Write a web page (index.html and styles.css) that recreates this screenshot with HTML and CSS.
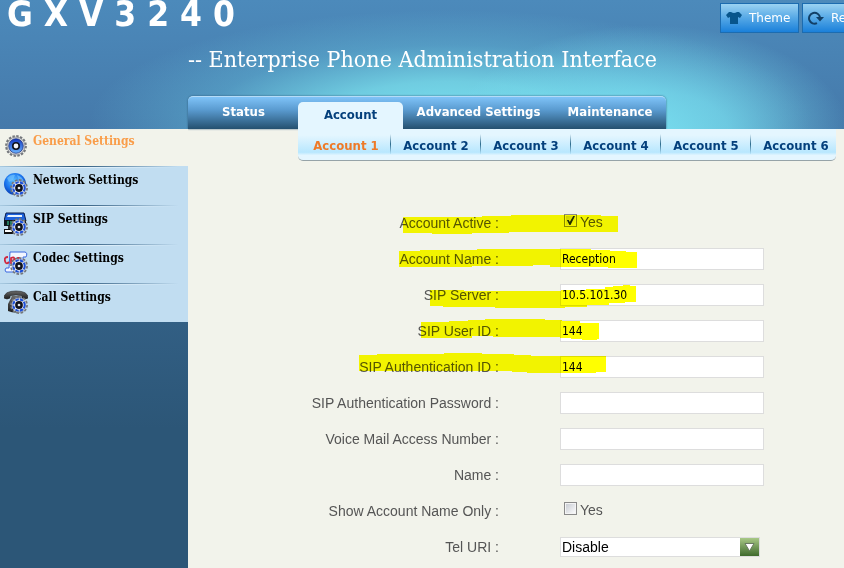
FILE: index.html
```html
<!DOCTYPE html>
<html lang="en">
<head>
<meta charset="UTF-8">
<meta name="viewport" content="width=device-width, initial-scale=1.0">
<title>GXV3240</title>
<link rel="stylesheet" href="styles.css">
</head>
<body>

<!-- shared icon parts -->
<svg class="defs" width="0" height="0" aria-hidden="true">
<defs>
<radialGradient id="blue" cx="45%" cy="35%" r="65%">
<stop offset="0" stop-color="#5cc0ff"/>
<stop offset="0.6" stop-color="#1a74ee"/>
<stop offset="1" stop-color="#0a3cb0"/>
</radialGradient>
<linearGradient id="ring" x1="0" y1="0" x2="0" y2="1">
<stop offset="0" stop-color="#1238c0"/>
<stop offset="1" stop-color="#6ab4ff"/>
</linearGradient>
<linearGradient id="dark" x1="0" y1="0" x2="0" y2="1">
<stop offset="0" stop-color="#6a6a6a"/>
<stop offset="1" stop-color="#1c1c1c"/>
</linearGradient>
<symbol id="gear" viewBox="0 0 24 24">
<circle cx="12" cy="12" r="10.6" fill="none" stroke="#74777c" stroke-width="2.6" stroke-dasharray="2.6 1.56"/>
<circle cx="12" cy="12" r="9.8" fill="#d4d6da" stroke="#85888d" stroke-width="0.8"/>
<circle cx="12" cy="12" r="7.9" fill="url(#ring)" stroke="#142a80" stroke-width="0.8"/>
<circle cx="12" cy="12" r="4.4" fill="#10131c"/>
<circle cx="12" cy="12" r="2.6" fill="#f4f6f8"/>
</symbol>
<symbol id="smallGear" viewBox="0 0 24 24">
<circle cx="12" cy="12" r="10.4" fill="none" stroke="#74777c" stroke-width="3" stroke-dasharray="3.4 2"/>
<circle cx="12" cy="12" r="9.8" fill="#c8cbd0"/>
<circle cx="12" cy="12" r="7.6" fill="#fff" stroke="#1c50d8" stroke-width="2.8" stroke-dasharray="4.6 1.4"/>
<circle cx="12" cy="12" r="5.2" fill="#10131c"/>
<circle cx="12" cy="12" r="1.8" fill="#e4e8ee"/>
</symbol>
</defs>
</svg>

<header class="header">
<div class="top">
<h1 class="model">G X V 3 2 4 0</h1>
<div class="tools">
<button type="button">
<svg width="16" height="14" viewBox="0 0 16 14"><path d="M5 1 Q8 3 11 1 L13 1 L16 4 L14 7 L12 6 V13 H4 V6 L2 7 L0 4 L3 1 Z" fill="#07558c"/></svg>
Theme
</button>
<button type="button">
<svg width="16" height="14" viewBox="0 0 16 14"><path d="M9 12.2 A5.5 5.5 0 1 1 12 6.5" fill="none" stroke="#123f66" stroke-width="2"/><path d="M8 6 H16 L12 10.5 Z" fill="#123f66"/></svg>
Reboot
</button>
</div>
</div>
<p class="tagline">-- Enterprise Phone Administration Interface</p>
<nav class="tabs">
<a class="status" href="#">Status</a>
<a class="active" href="#">Account</a>
<a class="advanced" href="#">Advanced Settings</a>
<a class="maintenance" href="#">Maintenance</a>
</nav>
</header>

<div class="page">
<aside class="sidebar">
<nav class="side-menu">
<a class="active" href="#">
<svg width="24" height="24" viewBox="0 0 24 24"><use href="#gear" x="1" y="1" width="22" height="22"/></svg>
General Settings
</a>
<a href="#">
<svg width="24" height="24" viewBox="0 0 24 24">
<circle cx="11" cy="11" r="11" fill="url(#blue)"/>
<path d="M3 5 Q7 1 11 2 L9 7 L5 9 Z M13 2 Q19 4 20 9 L15 8 Z" fill="#7cc8ff" fill-opacity="0.6"/>
<use href="#smallGear" x="6" y="6" width="18" height="18"/>
</svg>
Network Settings
</a>
<a href="#">
<svg width="24" height="24" viewBox="0 0 24 24">
<path d="M2 1 H20 L22 9 H0 Z" fill="#1d62dc" stroke="#0a1c4c"/>
<path d="M4 3 H18 L18 5 H3 Z" fill="#e8f3ff"/>
<rect x="0" y="8" width="22" height="6" fill="#10161c"/>
<path d="M3 10 H14 M3 12 H14" stroke="#3ddc9c" stroke-dasharray="2 1"/>
<rect x="4" y="14" width="6" height="4" fill="#333"/>
<rect x="0" y="17" width="11" height="5" fill="#111"/>
<rect x="1" y="18" width="7" height="2" fill="#fff"/>
<use href="#smallGear" x="6" y="6" width="18" height="18"/>
</svg>
SIP Settings
</a>
<a href="#">
<svg width="24" height="24" viewBox="0 0 24 24">
<path d="M6 1 H21 Q24 2 22 6 H19 V18 Q18 21 15 21 H2 Q0 19 2 17 H5 Z" fill="#f2f6ff" stroke="#3a68e0"/>
<path d="M4 6 Q0 6 1 10 Q2 14 5 11 M7 13 V7 Q11 5 10 9 L7 10 M12 12 V7 M14 12 V7 L16 7" fill="none" stroke="#d02840" stroke-width="1.8"/>
<use href="#smallGear" x="6" y="6" width="18" height="18"/>
</svg>
Codec Settings
</a>
<a href="#">
<svg width="24" height="24" viewBox="0 0 24 24">
<path d="M8 6 H16 L20 14 V21 Q12 24 4 21 V14 Z" fill="url(#dark)"/>
<path d="M0 8 Q0 1 12 1 Q24 1 24 8 Q21 10 18 8 V6 Q12 4 6 6 V8 Q3 10 0 8 Z" fill="url(#dark)" stroke="#222" stroke-width="0.6"/>
<use href="#smallGear" x="6" y="6" width="18" height="18"/>
</svg>
Call Settings
</a>
</nav>
</aside>

<main class="content">
<nav class="accounts">
<a class="active" href="#">Account 1</a>
<a href="#">Account 2</a>
<a href="#">Account 3</a>
<a href="#">Account 4</a>
<a href="#">Account 5</a>
<a href="#">Account 6</a>
</nav>

<form class="settings">
<div class="row">
<label for="active">Account Active :</label>
<div class="check"><input type="checkbox" id="active" checked><label for="active">Yes</label></div>
</div>
<div class="row">
<label for="accountName">Account Name :</label>
<input type="text" id="accountName" value="Reception">
</div>
<div class="row">
<label for="server">SIP Server :</label>
<input type="text" id="server" value="10.5.101.30">
</div>
<div class="row">
<label for="userId">SIP User ID :</label>
<input type="text" id="userId" value="144">
</div>
<div class="row">
<label for="authId">SIP Authentication ID :</label>
<input type="text" id="authId" value="144">
</div>
<div class="row">
<label for="password">SIP Authentication Password :</label>
<input type="password" id="password">
</div>
<div class="row">
<label for="voicemail">Voice Mail Access Number :</label>
<input type="text" id="voicemail">
</div>
<div class="row">
<label for="name">Name :</label>
<input type="text" id="name">
</div>
<div class="row">
<label for="nameOnly">Show Account Name Only :</label>
<div class="check"><input type="checkbox" id="nameOnly"><label for="nameOnly">Yes</label></div>
</div>
<div class="row">
<label for="telUri">Tel URI :</label>
<div class="select">
<select id="telUri"><option>Disable</option></select>
<svg width="19" height="18" viewBox="0 0 19 18"><path d="M5 5.5 H14 L9.5 13 Z" fill="#fff" stroke="#6a7a62"/></svg>
</div>
</div>

<!-- marker strokes over the required fields -->
<svg class="marker" width="656" height="180" viewBox="188 205 656 180" fill="#ff0" aria-hidden="true">
<path d="M403 217H482V216H511V215H601V216H618V232H509V233H472V234H432V233H403Z"/>
<path d="M399 251H420V250H477V249H591V250H610V251H626V252H637V268H608V267H550V265H533V266H472V267H399Z"/>
<path d="M430 290H464V291H561V290H586V289H605V287H613V286H623V285H630V286H636V302H625V303H609V305H587V307H565V308H495V307H443V306H430Z"/>
<path d="M421 322H449V321H468V320H485V319H545V320H562V321H580V323H599V339H597V340H582V339H571V338H560V337H493V336H472V338H421Z"/>
<path d="M359 355H377V354H444V353H482V354H514V355H531V356H606V372H596V373H527V372H512V371H359Z"/>
</svg>
</form>
</main>
</div>

</body>
</html>
```
FILE: styles.css
```css
* {
box-sizing: border-box;
}
body {
margin: 0;
min-height: 100vh;
display: flex;
flex-direction: column;
overflow-x: hidden;
background: #f2f3eb;
font-family: "Liberation Sans", Arial, sans-serif;
font-size: 14px;
color: #555;
}

a {
text-decoration: none;
}

.defs {
position: absolute;
}

/* header */
.header {
height: 129px;
display: flex;
flex-direction: column;
color: #fff;
background:
radial-gradient(ellipse 200px 110px at 650px 135px, rgba(122, 226, 242, 0.9) 0%, rgba(122, 226, 242, 0.7) 40%, rgba(122, 226, 242, 0) 100%),
radial-gradient(ellipse 360px 110px at 450px 120px, #7ae2f2 0%, rgba(116, 213, 230, 0.9) 35%, rgba(100, 190, 218, 0.4) 68%, rgba(74, 134, 181, 0) 100%),
linear-gradient(to bottom, #4c8abb, #4579aa);
}

.top {
display: flex;
justify-content: space-between;
height: 39px;
}

.model {
margin: 0;
padding-left: 7px;
font-family: "DejaVu Sans Condensed", Tahoma, sans-serif;
font-size: 35px;
line-height: 28px;
white-space: nowrap;
}

.tools {
width: 124px;
display: flex;
gap: 3px;
padding-top: 3px;
overflow: hidden;
}

.tools button {
flex: none;
display: flex;
align-items: center;
gap: 7px;
width: 79px;
height: 30px;
padding: 0 5px;
border: 1px solid #1c6cb0;
background: linear-gradient(to bottom, #9ad2f2, #55a8e6 50%, #1a80da);
color: #fff;
font-family: "DejaVu Sans", Verdana, sans-serif;
font-size: 12px;
}

.tagline {
margin: 0 0 0 188px;
height: 57px;
font-family: "DejaVu Serif Condensed", Georgia, serif;
font-size: 23px;
line-height: 40px;
white-space: nowrap;
}

.tabs {
display: flex;
align-items: flex-end;
width: 478px;
height: 33px;
margin-left: 188px;
padding-left: 1px;
border-top: 1px solid #b5dcf8;
border-radius: 5px 5px 0 0;
background: linear-gradient(to bottom, #7fc3f8, #5a9bd0 40%, #24506f);
box-shadow: 0 0 2px #2a5578;
font-family: "DejaVu Sans Condensed", Tahoma, sans-serif;
font-size: 13px;
font-weight: bold;
line-height: 34px;
}

.tabs a {
color: #fff;
text-align: center;
}

.tabs .status {
width: 109px;
}

.tabs .active {
width: 105px;
height: 27px;
border-radius: 5px 5px 0 0;
background: #e4f6ff;
color: #04407c;
line-height: 26px;
}

.tabs .advanced {
width: 151px;
}

.tabs .maintenance {
flex: 1;
}

/* sidebar */
.page {
flex: 1;
display: flex;
}

.sidebar {
width: 188px;
flex: none;
background: linear-gradient(to bottom, #325f84 193px, #2c5677 300px);
}

.side-menu a {
display: flex;
align-items: flex-start;
gap: 5px;
height: 39px;
padding: 7px 0 0 4px;
background:
linear-gradient(to right, #a9cbe2, #2c587c 40%, #c1ddf1 95%) top / 100% 1px no-repeat,
linear-gradient(to right, #c1ddf1, #e8f4fc 40%, #c1ddf1 95%) 0 1px / 100% 1px no-repeat,
#c1ddf1;
color: #000;
font-family: "DejaVu Serif Condensed", Georgia, serif;
font-size: 12px;
font-weight: bold;
line-height: 15px;
}

.side-menu .active {
height: 37px;
padding-top: 5px;
background: #f2f3eb;
color: #f99d4a;
}

/* account tabs */
.content {
flex: 1;
min-width: 0;
}

.accounts {
display: flex;
width: 538px;
height: 32px;
margin-left: 110px;
padding-left: 3px;
border-bottom: 1px solid #96a3a8;
border-radius: 0 0 5px 5px;
background: linear-gradient(to bottom, #e4f6ff 20%, #b8e7fe 75%, #e4f6ff 85%);
font-family: "DejaVu Sans Condensed", Tahoma, sans-serif;
font-size: 13px;
font-weight: bold;
line-height: 33px;
}

.accounts a {
flex: none;
width: 90px;
background: linear-gradient(to bottom, #e4f6ff, #2a6a8c 50%, #b8e7fe) right 5px / 1px 20px no-repeat;
color: #04407c;
text-align: center;
white-space: nowrap;
}

.accounts a:last-child {
background: none;
}

.accounts .active {
color: #ee7a28;
}

/* form */
.settings {
position: relative;
margin-top: 44px;
}

.row {
display: grid;
grid-template-columns: 311px 204px;
gap: 61px;
align-items: center;
height: 36px;
}

.row > label {
text-align: right;
}

input[type="text"],
input[type="password"] {
width: 100%;
height: 22px;
padding: 0 1px;
border: 1px solid #ddd;
background: #fff;
color: #000;
font-family: "DejaVu Sans Condensed", Tahoma, sans-serif;
font-size: 12px;
}

.check {
display: flex;
align-items: center;
gap: 3px;
padding: 0 0 2px 4px;
}

input[type="checkbox"] {
appearance: none;
position: relative;
width: 13px;
height: 13px;
margin: 0 0 3px;
border: 1px solid #8a8a8a;
background: linear-gradient(135deg, #c4c8cf, #fff);
box-shadow: inset 0 0 0 1px #f4f4f4;
}

input[type="checkbox"]:checked::after {
content: "";
position: absolute;
inset: 1px;
background: #1d2a55;
clip-path: polygon(10% 45%, 30% 45%, 42% 68%, 80% 0, 100% 0, 50% 100%, 38% 100%);
}

.select {
position: relative;
width: 200px;
height: 20px;
}

.select select {
appearance: none;
width: 100%;
height: 20px;
padding: 0 1px;
border: 1px solid #ddd;
border-radius: 0;
background: #fff;
color: #000;
font-family: "Liberation Sans", Arial, sans-serif;
font-size: 14px;
}

.select svg {
position: absolute;
top: 1px;
right: 1px;
background: linear-gradient(to bottom, #a8c886, #3f6a2c);
pointer-events: none;
}

.marker {
position: absolute;
top: 0;
left: 0;
mix-blend-mode: multiply;
pointer-events: none;
}
```
